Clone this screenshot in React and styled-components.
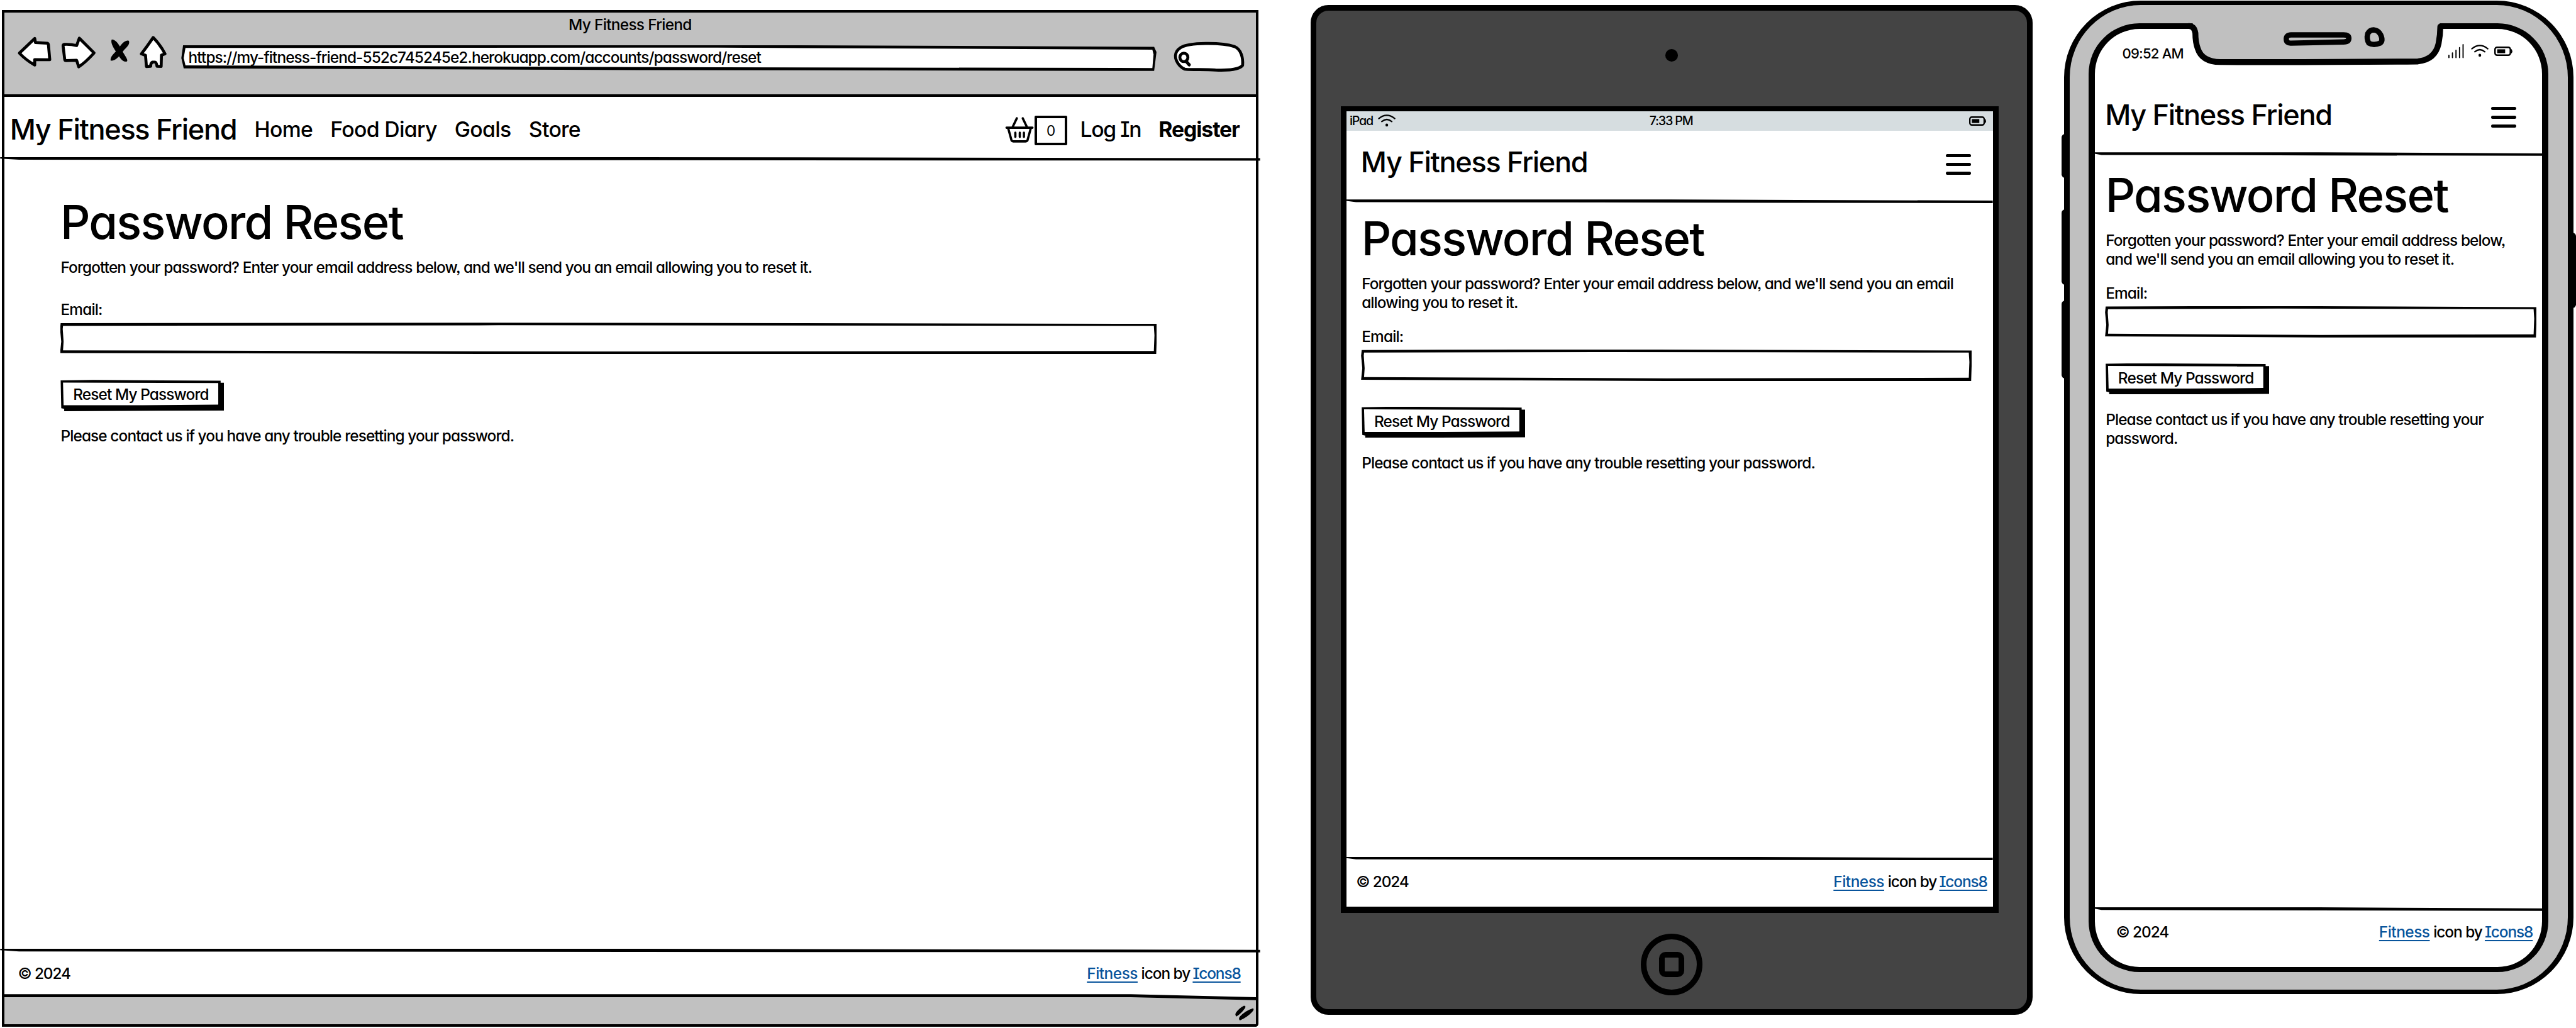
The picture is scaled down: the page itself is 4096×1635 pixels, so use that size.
import React from "react";
import styled, { createGlobalStyle, css } from "styled-components";

const SCALE = 4096 / 4364;
const u = (n) => `${+(n * SCALE).toFixed(3)}px`;

const INK = "#000";
const CHROME = "#c1c1c1";
const LINK = "#08549c";

const Global = createGlobalStyle`
  *, *::before, *::after { box-sizing: border-box; }
  html, body { margin: 0; background: #fff; }
  body {
    overflow: hidden;
    color: ${INK};
    font-family: Inter, "Open Sans", sans-serif;
    font-feature-settings: "cv11", "cv08", "ss03";
    font-weight: 450;
  }
  h1, p { margin: 0; }
  svg { display: block; flex: none; overflow: visible; }
`;

const Board = styled.div`
  display: flex;
  align-items: flex-start;
  width: ${u(4364)};
  height: ${u(1742)};
  overflow: hidden;
`;

/* ---------- shared pieces ---------- */

const Icon = styled.svg`
  width: ${(p) => u(p.$w)};
  height: ${(p) => u(p.$h)};
  margin-left: ${(p) => u(p.$gap || 0)};
  fill: none;
  stroke: ${INK};
  stroke-linecap: round;
  stroke-linejoin: round;
`;

const Divider = styled.div`
  flex: none;
  position: relative;
  height: ${u(6)};
  margin: 0 ${(p) => u(-(p.$bleed || 0))};
  background: ${INK};
  clip-path: polygon(0 0, 50% 0, 100% 30%, 100% 100%, 50% 88%, 1.5% 75%, 0 40%);
`;

const Brand = styled.div`
  font-size: ${u(48)};
  line-height: ${u(60)};
  font-weight: 500;
  letter-spacing: -0.029em;
  white-space: nowrap;
`;

const Form = styled.main`
  flex: 1;
  display: flex;
  flex-direction: column;
  align-items: flex-start;
  padding: ${(p) => u(p.$top + 1.5)} 0 0 ${(p) => u(p.$left)};
`;

const Heading = styled.h1`
  font-size: ${u(79)};
  line-height: ${u(80)};
  font-weight: 500;
  letter-spacing: -0.024em;
`;

const Copy = styled.p`
  font-size: ${u(26)};
  line-height: ${u(32)};
  letter-spacing: -0.0365em;
  margin-top: ${(p) => u(p.$gap)};
  padding-left: ${u(0.5)};
  max-width: ${(p) => u(p.$max)};
`;

const Label = styled.label`
  font-size: ${u(26)};
  line-height: ${u(32)};
  letter-spacing: -0.034em;
  margin-top: ${(p) => u(p.$gap)};
  padding-left: ${u(0.5)};
`;

const Field = styled.div`
  position: relative;
  width: ${(p) => u(p.$w)};
  height: ${u(53.5)};
  margin: ${u(6)} 0 0 ${u(-0.5)};
  background: ${INK};
  clip-path: polygon(
    ${u(1)} ${u(1)}, 40% 0, 100% ${u(2)}, 100% 40%, calc(100% - ${u(1)}) 100%,
    50% 100%, 0 ${u(51.5)}, ${u(2)} 60%, 0 20%
  );
  &::before {
    content: "";
    position: absolute;
    inset: 0;
    background: #fff;
    clip-path: polygon(
      ${u(5)} ${u(5.5)}, 40% ${u(4.5)}, calc(100% - ${u(5)}) ${u(5.5)}, calc(100% - ${u(4)}) 40%,
      calc(100% - ${u(5)}) ${u(48)}, 50% ${u(49)}, ${u(5)} ${u(47)}, ${u(6)} 60%, ${u(4.5)} 20%
    );
  }
`;

const SubmitButton = styled.button`
  position: relative;
  width: ${u(277)};
  height: ${u(53)};
  margin: ${u(43.5)} 0 0 ${u(0.5)};
  padding: 0 0 ${u(4)} ${u(21)};
  border: 0;
  background: ${INK};
  color: ${INK};
  font: inherit;
  font-feature-settings: inherit;
  font-size: ${u(26)};
  line-height: ${u(32)};
  letter-spacing: -0.036em;
  text-align: left;
  white-space: nowrap;
  clip-path: polygon(
    0 ${u(1)}, 20% 0, ${u(271)} ${u(1.5)}, ${u(271)} ${u(5)}, 100% ${u(5)}, 100% ${u(52)},
    ${u(6)} 100%, ${u(6)} ${u(49)}, ${u(1)} ${u(48)}
  );
  &::before {
    content: "";
    position: absolute;
    inset: 0;
    background: #fff;
    clip-path: polygon(
      ${u(4)} ${u(4.5)}, ${u(267)} ${u(5.5)}, ${u(267)} ${u(42)}, 50% ${u(43)}, ${u(5)} ${u(43)}
    );
  }
  span { position: relative; }
`;

const FooterRow = styled.footer`
  flex: none;
  display: flex;
  align-items: center;
  justify-content: space-between;
  height: ${(p) => u(p.$h)};
  padding: 0 ${(p) => u(p.$right)} ${(p) => u(p.$lift || 0)} ${(p) => u(p.$left)};
  font-size: ${u(26)};
  line-height: ${u(32)};
  white-space: nowrap;
`;

const Copyright = styled.span`
  letter-spacing: -0.046em;
  font-weight: 500;
`;

const Credit = styled.div`
  display: flex;
  font-weight: 500;
`;

const Link = styled.a`
  color: ${LINK};
  letter-spacing: ${(p) => p.$track}em;
  text-decoration: underline;
  text-decoration-thickness: ${u(2.3)};
  text-underline-offset: ${u(4.5)};
  text-decoration-skip-ink: none;
`;

const CreditText = styled.span`
  margin: 0 ${u(4.5)} 0 ${u(6)};
  letter-spacing: -0.042em;
`;

function ResetForm({ top, left, labelGap, fieldWidth, textWidth }) {
  return (
    <Form $top={top} $left={left}>
      <Heading>Password Reset</Heading>
      <Copy $gap={20} $max={textWidth}>
        Forgotten your password? Enter your email address below, and we'll send you an email
        allowing you to reset it.
      </Copy>
      <Label $gap={labelGap}>Email:</Label>
      <Field $w={fieldWidth} />
      <SubmitButton>
        <span>Reset My Password</span>
      </SubmitButton>
      <Copy $gap={26} $max={textWidth}>
        Please contact us if you have any trouble resetting your password.
      </Copy>
    </Form>
  );
}

function SiteFooter({ h, left, right, lift }) {
  return (
    <FooterRow $h={h} $left={left} $right={right} $lift={lift}>
      <Copyright>© 2024</Copyright>
      <Credit>
        <Link $track={-0.02}>Fitness</Link>
        <CreditText>icon by</CreditText>
        <Link $track={-0.046}>Icons8</Link>
      </Credit>
    </FooterRow>
  );
}

/* ---------- desktop browser ---------- */

const Browser = styled.section`
  flex: none;
  display: flex;
  flex-direction: column;
  width: ${u(2129)};
  height: ${u(1723)};
  margin: ${u(17)} 0 0 ${u(3)};
  border: ${u(5)} solid ${INK};
  border-radius: 0 0 ${u(5)} 0;
`;

const BrowserChrome = styled.header`
  flex: none;
  height: ${u(143)};
  background: ${CHROME};
  border-bottom: ${u(5)} solid ${INK};
`;

const WindowTitle = styled.div`
  height: ${u(40)};
  line-height: ${u(42.5)};
  text-align: center;
  font-size: ${u(26)};
  letter-spacing: -0.028em;
`;

const Toolbar = styled.div`
  display: flex;
  align-items: flex-start;
  height: ${u(62)};
  padding-left: ${u(23)};
`;

const AddressBar = styled.div`
  position: relative;
  width: ${u(1652)};
  height: ${u(44)};
  margin: ${u(15)} 0 0 ${u(25)};
  padding-left: ${u(12)};
  background: ${INK};
  font-size: ${u(26)};
  line-height: ${u(41)};
  letter-spacing: -0.0375em;
  white-space: nowrap;
  clip-path: polygon(
    ${u(3)} 0, 55% 0, calc(100% - ${u(4)}) ${u(3)}, 100% ${u(12)}, calc(100% - ${u(4)}) 100%,
    48% ${u(42.5)}, ${u(4)} ${u(39.5)}, 0 ${u(22)}
  );
  &::before {
    content: "";
    position: absolute;
    inset: 0;
    background: #fff;
    clip-path: polygon(
      ${u(7)} ${u(5)}, 55% ${u(4.5)}, calc(100% - ${u(7)}) ${u(8)}, calc(100% - ${u(5)}) ${u(16)},
      calc(100% - ${u(7)}) ${u(39)}, 48% ${u(37.5)}, ${u(7)} ${u(34.5)}, ${u(4)} ${u(22)}
    );
  }
  span { position: relative; }
`;

const NavBar = styled.nav`
  flex: none;
  display: flex;
  align-items: center;
  gap: ${u(30)};
  height: ${u(102)};
  padding: ${u(8)} ${u(28)} 0 ${u(9.5)};
`;

const NavItem = styled.a`
  font-size: ${u(36)};
  line-height: ${u(44)};
  letter-spacing: ${(p) => p.$track ?? -0.02}em;
  font-weight: ${(p) => (p.$strong ? 700 : 450)};
  white-space: nowrap;
`;

const Basket = styled.div`
  display: flex;
  align-items: center;
  margin: 0 ${u(-8)} 0 auto;
`;

const BasketCount = styled.div`
  width: ${u(55)};
  height: ${u(50)};
  margin-left: ${u(2)};
  padding-top: ${u(4)};
  position: relative;
  top: ${u(1.5)};
  border: ${u(4.5)} solid ${INK};
  border-radius: ${u(2)};
  font-size: ${u(24)};
  line-height: ${u(36)};
  font-weight: 400;
  text-align: center;
`;

const BottomBar = styled.div`
  flex: none;
  position: relative;
  display: flex;
  align-items: flex-start;
  justify-content: flex-end;
  height: ${u(51)};
  padding: ${u(19)} ${u(4)} 0 0;
  background: ${INK};
  clip-path: polygon(0 0, 90% 0, 100% ${u(5)}, 100% 100%, 0 100%);
  &::before {
    content: "";
    position: absolute;
    inset: 0;
    background: ${CHROME};
    clip-path: polygon(0 ${u(5)}, 90% ${u(5)}, 100% ${u(10)}, 100% 100%, 0 100%);
  }
  svg { position: relative; }
`;

function DesktopMock() {
  return (
    <Browser>
      <BrowserChrome>
        <WindowTitle>My Fitness Friend</WindowTitle>
        <Toolbar>
          <Icon $w={57} $h={56} viewBox="31 62 57 56" strokeWidth="5">
            <path fill="#fff" d="M34 91.3 L60 66.5 L61.2 73.4 L81.5 74.5 Q83 75 83.2 77 L85.5 102.5 L60 102.3 L60 111.5 Q45 103 34 91.3Z" />
          </Icon>
          <Icon $w={59} $h={56} $gap={16.5} viewBox="104.5 62 59 56" strokeWidth="5">
            <path fill="#fff" d="M108 79 Q108 77 110 76.5 Q121 76 131 78.5 L135.5 66 L160.5 91 Q146 107 134.5 114.5 L131 103.5 L113 104 Q111 104 110.8 102 Z" />
          </Icon>
          <Icon $w={34} $h={56} $gap={23.5} viewBox="187 62 34 56">
            <g fill={INK} stroke="none">
              <path d="M190 68 C198 68 204 80 209 90 C214 98 218 104 215.500 105.500 C208 107.500 203 98 198 90 C191 80 187.500 72 190 68Z" />
              <path d="M219 70.500 C212 67.500 205 78 199 86 C193 93 187 97 188 104 C196 105 203 96 209 88 C215 81 221 77 219 70.500Z" />
            </g>
          </Icon>
          <Icon $w={46} $h={56} $gap={16} viewBox="237 62 46 56" strokeWidth="5">
            <path fill="#fff" d="M260 64.800 Q272 77 280 92.500 L274 94.800 L273.500 113.800 L266.500 113.500 Q265.500 106.500 263 106.500 L259 106.500 Q255.500 108 255.800 113.500 L248.500 114 L247 95 L240 92.500 Q249 81 260 64.800Z" />
          </Icon>
          <AddressBar>
            <span>https://my-fitness-friend-552c745245e2.herokuapp.com/accounts/password/reset</span>
          </AddressBar>
          <Icon $w={120} $h={62} $gap={29} viewBox="1989 62 120 62" strokeWidth="5">
            <path fill="#fff" d="M2000 113 C1989 101 1990 89 2001 82 C2015 73 2070 73 2092 80 C2104 85 2107 100 2106 112 C2102 118 2085 121 2060 120 C2040 118 2016 120 2008 118.500 C2004 117 2002 115 2000 113Z" />
            <ellipse cx="2006.500" cy="98.500" rx="6.800" ry="7.200" strokeWidth="5" />
            <path d="M2010 105 L2015.500 111" strokeWidth="5.500" />
          </Icon>
        </Toolbar>
      </BrowserChrome>
      <NavBar>
        <Brand>My Fitness Friend</Brand>
        <NavItem>Home</NavItem>
        <NavItem>Food Diary</NavItem>
        <NavItem>Goals</NavItem>
        <NavItem>Store</NavItem>
        <Basket>
          <Icon $w={47} $h={50} viewBox="1702 198 47 50" strokeWidth="3.800">
            <path d="M1703.500 220.500 H1747.500 M1714 219 L1721 204.500 M1738 219 L1731 204.500 M1706.500 222 L1712 242 Q1713 243.700 1715 243.700 H1736 Q1738 243.700 1739 242 L1744.500 222 M1718.500 229 V236 M1726 229 V236 M1733 229 V236" />
          </Icon>
          <BasketCount>0</BasketCount>
        </Basket>
        <NavItem $track={-0.042}>Log In</NavItem>
        <NavItem $strong $track={-0.032}>Register</NavItem>
      </NavBar>
      <Divider $bleed={7} />
      <ResetForm top={63} left={95} labelGap={40} fieldWidth={1858} textWidth={1800} />
      <Divider $bleed={7} />
      <SiteFooter h={71} left={23} right={26} />
      <BottomBar>
        <Icon $w={31} $h={27} viewBox="2091 1704 31 27">
          <g fill={INK} stroke="none">
            <path d="M2106 1704.500 Q2110 1705 2107.500 1709 Q2101 1718 2093 1723 Q2090 1720 2092.500 1716 Q2098 1708.500 2106 1704.500Z" />
            <path d="M2121 1709 Q2124 1710 2120 1715 Q2112 1724 2099 1729.500 Q2096 1727 2099 1723 Q2108 1713 2121 1709Z" />
          </g>
        </Icon>
      </BottomBar>
    </Browser>
  );
}

/* ---------- handheld shared ---------- */

const AppHeader = styled.header`
  flex: none;
  display: flex;
  align-items: center;
  justify-content: space-between;
  height: ${u(117)};
  padding: 0 ${(p) => u(p.$right)} ${u(9)} ${(p) => u(p.$left)};
`;

const MenuIcon = styled.div`
  display: flex;
  flex-direction: column;
  justify-content: space-between;
  width: ${u(43)};
  height: ${u(35)};
  margin-top: ${u(7.5)};
  i {
    height: ${u(5)};
    border-radius: ${u(3)};
    background: ${INK};
  }
`;

function MobileHeader({ left, right }) {
  return (
    <AppHeader $left={left} $right={right}>
      <Brand>My Fitness Friend</Brand>
      <MenuIcon>
        <i />
        <i />
        <i />
      </MenuIcon>
    </AppHeader>
  );
}

const WifiIcon = ({ gap }) => (
  <Icon $w={30} $h={21} $gap={gap} viewBox="0 0 30 21" strokeWidth="2.400">
    <path d="M1.500 7 Q15 -4 28.500 7 M6.500 12 Q15 5 23.500 12" />
    <ellipse cx="15" cy="18" rx="2.300" ry="2.600" fill={INK} stroke="none" />
  </Icon>
);

const BatteryIcon = ({ gap, w }) => (
  <Icon $w={w} $h={16} $gap={gap} viewBox="0 0 31 16" preserveAspectRatio="none" strokeWidth="2.600">
    <rect x="1.300" y="1.300" width="26" height="13.400" rx="3.500" />
    <path d="M29 5.500 Q30.500 8 29 10.500" strokeWidth="2" />
    <rect x="5" y="4.700" width="13.500" height="6.600" fill={INK} stroke="none" />
  </Icon>
);

/* ---------- tablet ---------- */

const Tablet = styled.section`
  flex: none;
  display: flex;
  flex-direction: column;
  align-items: center;
  width: ${u(1223.7)};
  height: ${u(1712)};
  margin: ${u(8)} 0 0 ${u(88)};
  border: ${u(10)} solid ${INK};
  border-radius: ${u(30)};
  background: #444;
`;

const TabletEdge = styled.div`
  flex: none;
  display: grid;
  place-items: center;
  height: ${u(163)};
  padding: ${(p) => (p.$bottom ? `${u(11)} 0 0` : `0 0 ${u(11)}`)};
`;

const Camera = styled.div`
  width: ${u(21)};
  height: ${u(21)};
  border-radius: 50%;
  background: ${INK};
`;

const HomeButton = styled.div`
  display: grid;
  place-items: center;
  width: ${u(105)};
  height: ${u(105)};
  border: ${u(10)} solid ${INK};
  border-radius: 50%;
  &::before {
    content: "";
    width: ${u(43)};
    height: ${u(43)};
    border: ${u(10)} solid ${INK};
    border-radius: ${u(11)};
  }
`;

const TabletScreen = styled.div`
  flex: 1;
  align-self: flex-start;
  display: flex;
  flex-direction: column;
  width: ${u(1114.3)};
  margin-left: ${u(41.7)};
  border: ${u(10)} solid ${INK};
  border-top-width: ${u(9)};
  border-bottom-width: ${u(11)};
  background: #fff;
`;

const TabletStatus = styled.div`
  flex: none;
  display: grid;
  grid-template-columns: 1fr auto 1fr;
  align-items: center;
  height: ${u(32)};
  padding: 0 ${u(11.5)} ${u(1)} ${u(5.5)};
  background: #d6dde0;
  font-size: ${u(21)};
  line-height: ${u(28)};
`;

const StatusLeft = styled.div`
  display: flex;
  align-items: center;
  letter-spacing: -0.06em;
`;

const Clock = styled.span`
  letter-spacing: ${(p) => p.$track}em;
  margin-left: ${(p) => u(p.$shift || 0)};
  white-space: nowrap;
`;

const StatusRight = styled.div`
  display: flex;
  align-items: center;
  justify-content: flex-end;
`;

function TabletMock() {
  return (
    <Tablet>
      <TabletEdge>
        <Camera />
      </TabletEdge>
      <TabletScreen>
        <TabletStatus>
          <StatusLeft>
            iPad
            <WifiIcon gap={9} />
          </StatusLeft>
          <Clock $track={-0.06} $shift={11}>7:33 PM</Clock>
          <StatusRight>
            <BatteryIcon w={29} />
          </StatusRight>
        </TabletStatus>
        <MobileHeader left={24.5} right={36.7} />
        <Divider />
        <ResetForm top={19} left={25.5} labelGap={25.5} fieldWidth={1034.5} textWidth={1035} />
        <Divider />
        <SiteFooter h={79} left={16.5} right={9.5} lift={8} />
      </TabletScreen>
      <TabletEdge $bottom>
        <HomeButton />
      </TabletEdge>
    </Tablet>
  );
}

/* ---------- phone ---------- */

const Phone = styled.section`
  flex: none;
  position: relative;
  display: flex;
  width: ${u(862.5)};
  height: ${u(1683.5)};
  margin: ${u(1)} 0 0 ${u(53.3)};
  padding: ${u(31)} ${u(32.5)} ${u(30)} ${u(31.5)};
  border: ${u(10)} solid ${INK};
  border-top-width: ${u(8)};
  border-bottom-width: ${u(8.5)};
  border-radius: ${u(130)};
  background: #c0c0c0;
`;

const sideLeft = css`
  left: ${u(-14.6)};
  border-radius: ${u(6)} 0 0 ${u(6)};
`;
const sideRight = css`
  right: ${u(-14.5)};
  border-radius: 0 ${u(6)} ${u(6)} 0;
`;

const SideKey = styled.span`
  position: absolute;
  top: ${(p) => u(p.$top - 9)};
  width: ${u(9)};
  height: ${(p) => u(p.$len)};
  background: ${INK};
  ${(p) => (p.$right ? sideRight : sideLeft)}
`;

const PhoneScreen = styled.div`
  flex: 1;
  display: flex;
  flex-direction: column;
  border: ${u(11)} solid ${INK};
  border-top-width: ${u(10)};
  border-bottom-width: ${u(9)};
  border-radius: ${u(86)};
  background: #fff;
`;

const Notch = styled(Icon)`
  position: absolute;
  left: ${u(193)};
  top: ${u(26)};
`;

const PhoneStatus = styled.div`
  flex: none;
  display: flex;
  align-items: center;
  justify-content: space-between;
  height: ${u(92)};
  padding: 0 ${u(50.5)} ${u(9)} ${u(46.5)};
  font-size: ${u(23.5)};
  line-height: ${u(30)};
`;

const PhoneIndicators = styled(StatusRight)`
  margin-top: ${u(-8)};
`;

function PhoneMock() {
  return (
    <Phone>
      <SideKey $top={228} $len={74} />
      <SideKey $top={355} $len={128} />
      <SideKey $top={510} $len={132} />
      <SideKey $top={395} $len={128} $right />
      <PhoneScreen>
        <PhoneStatus>
          <Clock $track={-0.035}>09:52 AM</Clock>
          <PhoneIndicators>
            <Icon $w={27} $h={24} viewBox="0 0 27 24" strokeWidth="2">
              <path d="M1 19 V23 M7 15 V23 M13 10.500 V23 M19 6 V23 M25 1 V23" />
            </Icon>
            <WifiIcon gap={11.5} />
            <BatteryIcon gap={9} w={31} />
          </PhoneIndicators>
        </PhoneStatus>
        <MobileHeader left={17.5} right={43.5} />
        <Divider />
        <ResetForm top={25} left={18} labelGap={26} fieldWidth={731} textWidth={704} />
        <Divider />
        <SiteFooter h={95} left={36} right={16} lift={24.5} />
      </PhoneScreen>
      <Notch $w={450} $h={80} viewBox="3700 35 450 80">
        <path fill="#c0c0c0" stroke="none" d="M3715 38 L3722 75 Q3728 106 3762 106 L4097 105 Q4130 100 4134 38Z" />
        <path strokeWidth="10" d="M3709 45 Q3718 45 3720 57 Q3720 72 3724 83 Q3731 105.500 3762 106 Q3935 106.500 4097 105 Q4126 102 4132 75 Q4135 60 4135 46" />
        <path strokeWidth="9" d="M3882 60 H3971 Q3980 60 3980 66 Q3980 72 3971 72 L3882 74 Q3874 74.500 3874 67 Q3874 60 3882 60Z" />
        <path strokeWidth="9" d="M4022 51.500 Q4030 52 4034 60 Q4038.500 70 4033 74 Q4022 78.500 4014 74 Q4009.500 67 4012 58 Q4015.500 51.500 4022 51.500Z" />
      </Notch>
    </Phone>
  );
}

export default function App() {
  return (
    <>
      <Global />
      <Board>
        <DesktopMock />
        <TabletMock />
        <PhoneMock />
      </Board>
    </>
  );
}
